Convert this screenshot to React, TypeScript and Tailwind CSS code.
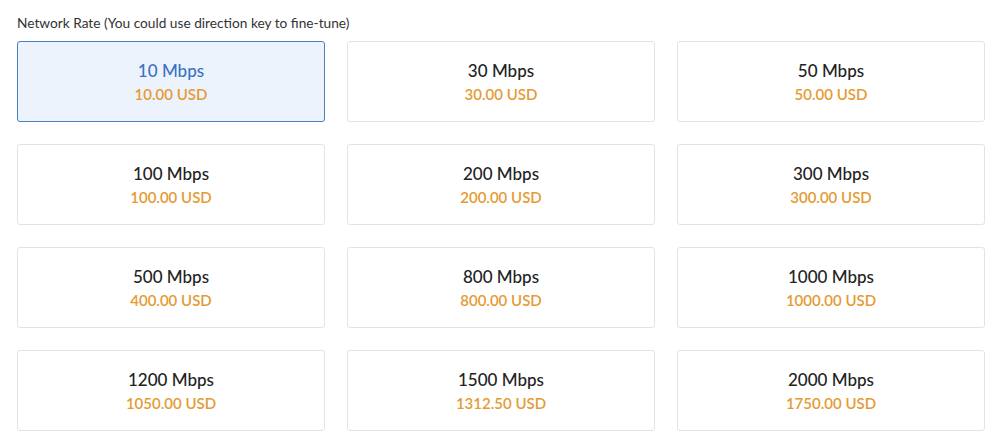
import { useState } from 'react';

const rates = [
  { mbps: 10, price: '10.00' },
  { mbps: 30, price: '30.00' },
  { mbps: 50, price: '50.00' },
  { mbps: 100, price: '100.00' },
  { mbps: 200, price: '200.00' },
  { mbps: 300, price: '300.00' },
  { mbps: 500, price: '400.00' },
  { mbps: 800, price: '800.00' },
  { mbps: 1000, price: '1000.00' },
  { mbps: 1200, price: '1050.00' },
  { mbps: 1500, price: '1312.50' },
  { mbps: 2000, price: '1750.00' },
];

export default function App() {
  const [selected, setSelected] = useState(10);

  return (
    <div className="w-[1000px] h-[438px] bg-white pl-[17px] pr-[15px] pt-[14px] font-['Lato','Noto_Sans',sans-serif]">
      {/* Label */}
      <div className="text-[13.7px] leading-[18px] text-[#333]">
        Network Rate (You could use direction key to fine-tune)
      </div>

      <div className="mt-[9px] grid grid-cols-3 gap-x-[22px] gap-y-[22px]">
        {rates.map((r) => {
          const active = r.mbps === selected;
          return (
            <button
              key={r.mbps}
              onClick={() => setSelected(r.mbps)}
              className={
                active
                  ? 'h-[81px] rounded-[3px] border border-[#4a7fc1] bg-[#edf3fc] flex flex-col items-center justify-center'
                  : 'h-[81px] rounded-[3px] border border-[#e3e3e3] bg-white flex flex-col items-center justify-center'
              }
            >
              <span
                className={
                  active
                    ? 'text-[17px] leading-[20px] font-medium text-[#3a72c4]'
                    : 'text-[17px] leading-[20px] font-medium text-[#222]'
                }
              >
                {r.mbps} Mbps
              </span>
              <span className="mt-[4px] text-[15px] leading-[18px] font-semibold text-[#e49b34]">
                {r.price} USD
              </span>
            </button>
          );
        })}
      </div>
    </div>
  );
}
